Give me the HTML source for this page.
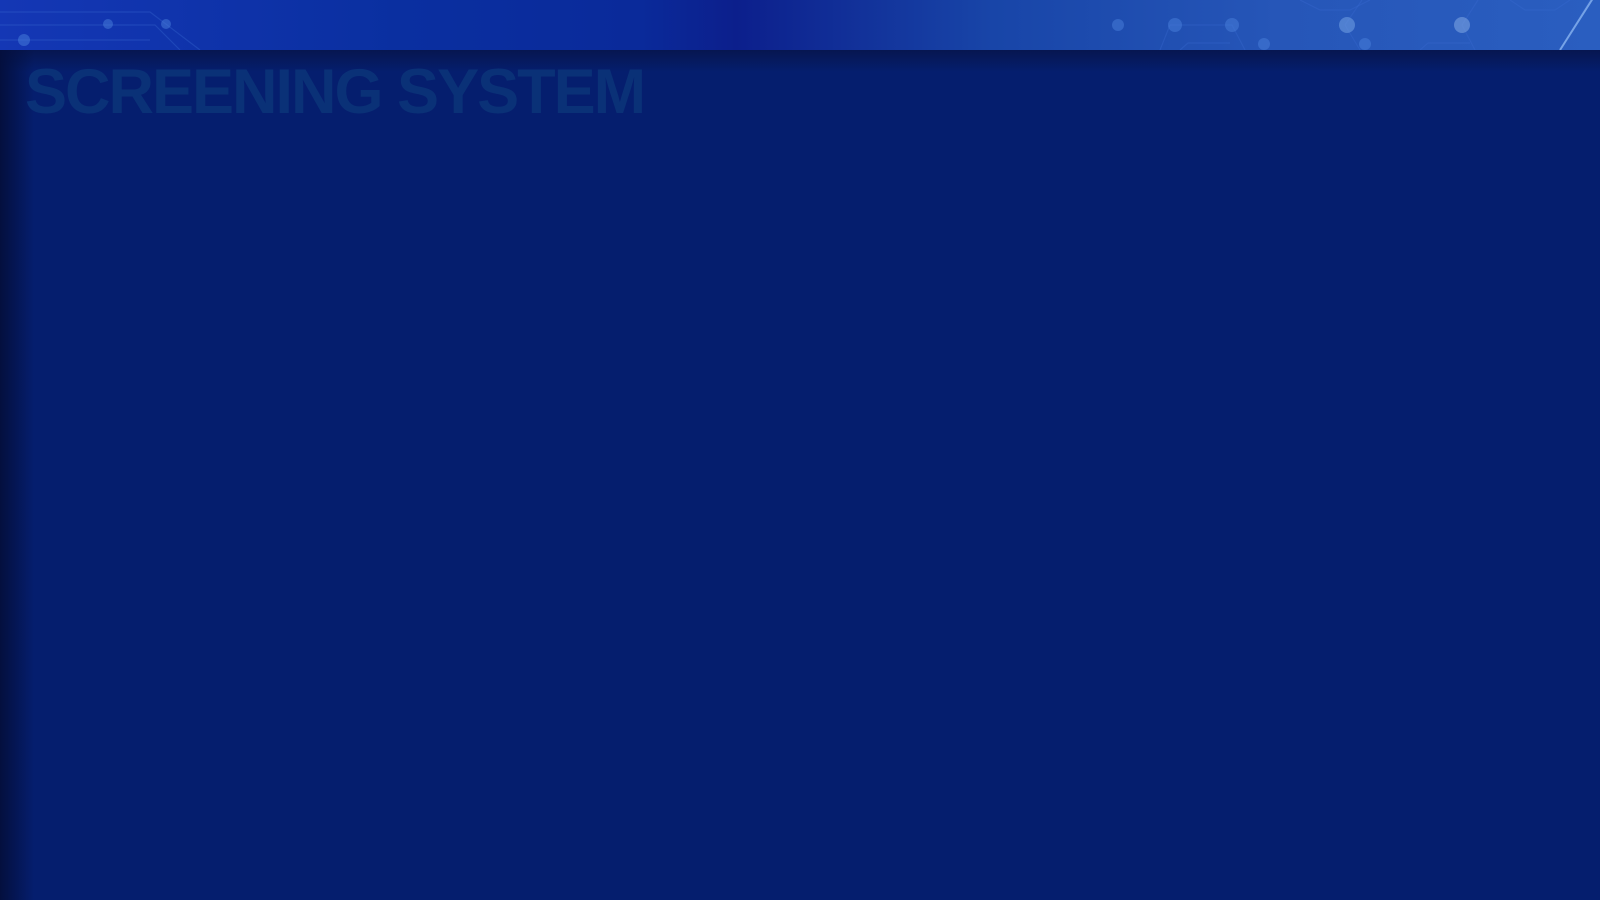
<!DOCTYPE html>
<html><head><style>
html,body{margin:0;padding:0;width:1600px;height:900px;overflow:hidden;background:#051e6e;font-family:"Liberation Sans",sans-serif}
.hdr{position:absolute;left:0;top:0;width:1600px;height:50px;background:linear-gradient(90deg,#1437b5 0%,#0a2fa0 25%,#0a2a9a 40%,#0c1f8c 46%,#1845a8 62%,#2656b8 80%,#2a5ec0 100%);overflow:hidden}
.main{position:absolute;left:0;top:50px;width:1600px;height:850px;background:#051e6e}
.top{position:absolute;left:0;top:50px;width:1600px;height:22px;background:linear-gradient(#061650,rgba(5,30,110,0))}
.left{position:absolute;left:0;top:50px;width:34px;height:850px;background:linear-gradient(90deg,#040f3e,rgba(5,30,110,0))}
h1{position:absolute;left:25px;top:57px;margin:0;font-size:63px;font-weight:bold;color:#0a3177;letter-spacing:-2px;line-height:70px;white-space:nowrap}
</style></head><body>
<div class="hdr">
<svg width="1600" height="50" style="position:absolute;left:0;top:0">
<g stroke="#3a6ad0" stroke-opacity=".35" fill="none" stroke-width="1.2">
<path d="M0 12 H150 L200 50 M0 25 H155 L180 50 M0 40 H150"/>
<path d="M1170 25 H1232 L1245 50 M1170 25 L1160 50 M1345 25 L1362 0 M1345 25 L1360 50 M1462 25 L1478 0 M1462 25 L1475 50 M1560 50 L1590 0"/>
<path d="M1300 0 L1320 10 H1350 L1370 0 M1510 0 L1525 10 H1555 L1570 0 M1180 50 L1188 43 H1230 M1420 50 L1428 43 H1470"/>
</g>
<g fill="#4a80dc" fill-opacity=".5">
<circle cx="24" cy="40" r="6"/><circle cx="108" cy="24" r="5"/><circle cx="166" cy="24" r="5"/>
<circle cx="1118" cy="25" r="6"/><circle cx="1175" cy="25" r="7"/><circle cx="1232" cy="25" r="7"/>
<circle cx="1347" cy="25" r="8" fill="#7aa8e8"/><circle cx="1462" cy="25" r="8" fill="#8ab0e8"/>
<circle cx="1264" cy="44" r="6"/><circle cx="1365" cy="44" r="6"/>
</g>
<path d="M1560 50 L1595 -5" stroke="#a8d0ff" stroke-opacity=".6" stroke-width="2"/>
</svg>
</div>
<div class="main"></div>
<div class="top"></div>
<div class="left"></div>
<h1>SCREENING SYSTEM</h1>
</body></html>
